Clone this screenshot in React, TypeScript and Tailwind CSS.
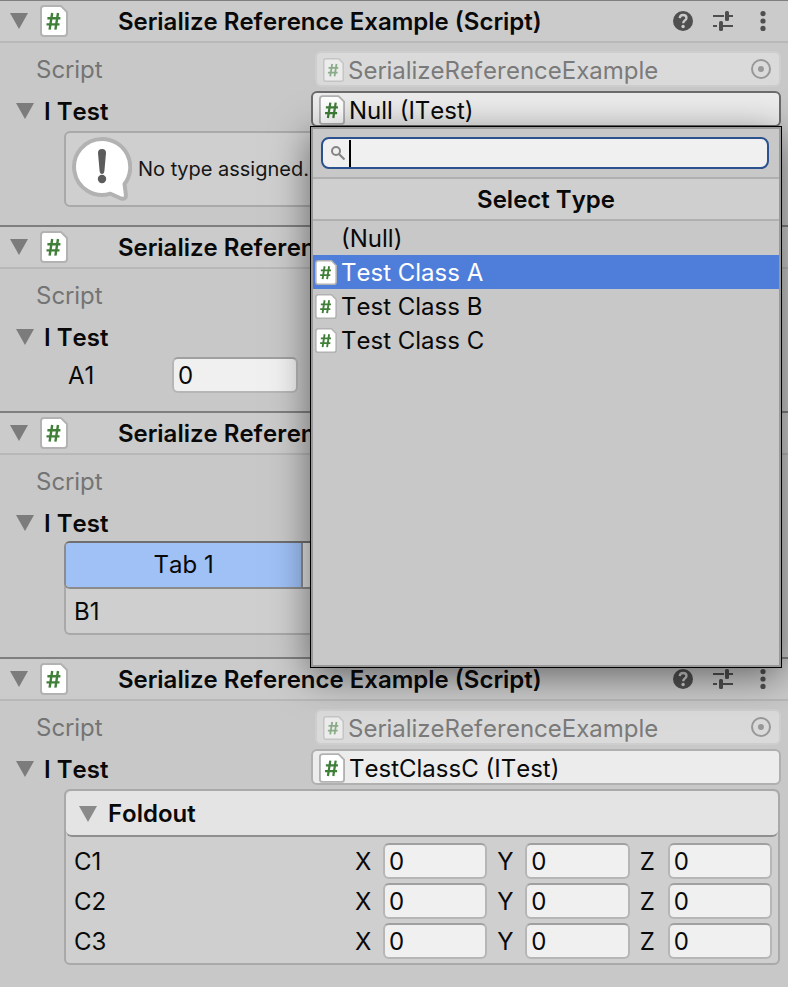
import React from "react";

type IconProps = { className?: string };

function Caret({ className = "fill-[#7c7c7c]" }: IconProps) {
  return (
    <svg viewBox="0 0 18 16" className={`h-4 w-[18px] shrink-0 ${className}`} aria-hidden="true">
      <path d="M0 0h18L9 16z" />
    </svg>
  );
}

function ScriptIcon({ className = "h-8 w-7" }: IconProps) {
  return (
    <svg viewBox="0 0 28 32" className={`shrink-0 ${className}`} aria-hidden="true">
      <path
        d="M4 1h17l6 6v21a3 3 0 0 1-3 3H4a3 3 0 0 1-3-3V4a3 3 0 0 1 3-3z"
        fill="#fff"
        stroke="#b2b2b2"
        strokeWidth="2"
      />
      <path
        d="M12.2 8 9.6 24.6M18 8l-2.600 16.600M7.400 13.200h13M6.500 19.400h13"
        fill="none"
        stroke="#3f7f38"
        strokeWidth="2.400"
      />
    </svg>
  );
}

function HelpIcon() {
  return (
    <svg viewBox="0 0 20 20" className="size-5" aria-hidden="true">
      <circle cx="10" cy="10" r="10" fill="#4f4f4f" />
      <path
        d="M6.700 7.200C6.900 5 8.200 4 10.100 4c2 0 3.400 1.100 3.400 2.900 0 2.500-3.300 2.600-3.300 5.300"
        fill="none"
        stroke="#cbcbcb"
        strokeWidth="2.300"
      />
      <circle cx="10.100" cy="15.500" r="1.700" fill="#cbcbcb" />
    </svg>
  );
}

function PresetIcon() {
  return (
    <svg viewBox="0 0 20 20" className="size-5" aria-hidden="true">
      <path d="M0 5h11M16 5h4M0 15h4M10 15h10" stroke="#4f4f4f" strokeWidth="2" />
      <rect x="12" y="0" width="4" height="10" rx="1.500" fill="#4f4f4f" />
      <rect x="6" y="10" width="4" height="10" rx="1.500" fill="#4f4f4f" />
    </svg>
  );
}

function MoreIcon() {
  return (
    <svg viewBox="0 0 6 20" className="h-5 w-1.5" fill="#4f4f4f" aria-hidden="true">
      <circle cx="3" cy="2.600" r="2.600" />
      <circle cx="3" cy="10" r="2.600" />
      <circle cx="3" cy="17.400" r="2.600" />
    </svg>
  );
}

function InfoIcon() {
  return (
    <svg viewBox="0 0 60 64" className="h-16 w-15 shrink-0" aria-hidden="true">
      <path
        d="M30 2a28 28 0 1 0 8.500 54.700L49 61.500q5.500 1.500 4.800-4.500L52.500 47A28 28 0 0 0 30 2z"
        fill="#fff"
        stroke="#b2b2b2"
        strokeWidth="4"
        strokeLinejoin="round"
      />
      <path d="M26 16q0-4 4-4t4 4l-1.600 18q-.4 3-2.400 3t-2.400-3z" fill="#5c5c5c" />
      <circle cx="30" cy="42" r="4.200" fill="#5c5c5c" />
    </svg>
  );
}

function Component({
  className,
  showActions = false,
  children,
}: {
  className: string;
  showActions?: boolean;
  children: React.ReactNode;
}) {
  return (
    <section className={`border-[#7f7f7f] ${className}`}>
      <header className="flex h-[42px] items-center border-b-2 border-[#b8b8b8] bg-[#cbcbcb] pr-[22px] pl-2.5">
        <button type="button" aria-label="Toggle component">
          <Caret />
        </button>
        <ScriptIcon className="ml-3 h-8 w-7" />
        <h2 className="ml-[50px] flex-1 pt-0.5 font-semibold whitespace-nowrap">Serialize Reference Example (Script)</h2>
        {showActions && (
          <div className="flex items-center">
            <button type="button" aria-label="Help">
              <HelpIcon />
            </button>
            <button type="button" aria-label="Presets" className="ml-5">
              <PresetIcon />
            </button>
            <button type="button" aria-label="More options" className="ml-[27px]">
              <MoreIcon />
            </button>
          </div>
        )}
      </header>
      <div className="pt-2 pr-[7px]">{children}</div>
    </section>
  );
}

function ScriptRow({ filled = false }: { filled?: boolean }) {
  return (
    <div className="flex h-9 items-center">
      <span className="w-[315px] shrink-0 pt-0.5 pl-9 text-[#747474]">Script</span>
      {filled && (
        <div className="flex h-9 min-w-0 flex-1 items-center rounded-md border-2 border-[#cecece] bg-[#dadada] pr-2 pl-1.5 text-[#7a7a7a]">
          <div className="flex min-w-0 flex-1 items-center pt-0.5">
            <ScriptIcon className="h-6 w-[21px] opacity-50" />
            <span className="ml-1 pt-0.5">SerializeReferenceExample</span>
          </div>
          <button type="button" disabled aria-label="Select script">
            <svg viewBox="0 0 20 20" className="size-5" aria-hidden="true">
              <circle cx="10" cy="10" r="9" fill="none" stroke="#989898" strokeWidth="2" />
              <circle cx="10" cy="10" r="3" fill="#989898" />
            </svg>
          </button>
        </div>
      )}
    </div>
  );
}

function TestRow({ children }: { children?: React.ReactNode }) {
  return (
    <div className="mt-1 flex h-9 items-center">
      <div className="flex w-[311px] shrink-0 items-center pt-1 pl-4">
        <button type="button" aria-label="Toggle I Test">
          <Caret />
        </button>
        <span className="ml-2.5 pt-0.5 font-semibold">I Test</span>
      </div>
      {children}
    </div>
  );
}

function TypeButton({ label, className }: { label: string; className: string }) {
  return (
    <button
      type="button"
      aria-haspopup="listbox"
      className={`flex h-9 w-full items-center rounded-md border-2 bg-[#ececec] pt-0.5 pl-1.5 ${className}`}
    >
      <ScriptIcon className="h-[30px] w-[26px]" />
      <span className="ml-1 pt-0.5">{label}</span>
    </button>
  );
}

function NumberField({ label, className }: { label: string; className: string }) {
  return (
    <input
      aria-label={label}
      defaultValue="0"
      inputMode="numeric"
      className={`h-9 min-w-0 rounded-md border-2 border-[#b6b6b6] border-t-[#a0a0a0] bg-[#f0f0f0] px-1 outline-none ${className}`}
    />
  );
}

const options = [
  { name: "(Null)", icon: false, selected: false },
  { name: "Test Class A", icon: true, selected: true },
  { name: "Test Class B", icon: true, selected: false },
  { name: "Test Class C", icon: true, selected: false },
];

function TypeMenu() {
  return (
    <div className="absolute -inset-x-px top-[35px] z-10 border border-black shadow-[0_8px_36px_rgba(0,0,0,0.5)]">
      <div className="h-[540px] border-2 border-[#999999] bg-[#c8c8c8]">
        <div className="py-2 pr-2.5 pl-2">
          <label className="flex h-8 items-center rounded-lg border-2 border-[#2b518f] bg-[#f0f0f0] px-2">
            <svg viewBox="0 0 14 14" className="size-3.5 shrink-0" fill="none" stroke="#858585" aria-hidden="true">
              <circle cx="5" cy="5" r="4" strokeWidth="2" />
              <path d="m8 8 5.500 5.500" strokeWidth="2.200" />
            </svg>
            <span className="ml-1 h-[27px] w-0.5 shrink-0 bg-black" />
            <input aria-label="Search types" className="h-7 min-w-0 flex-1 bg-transparent outline-none" />
          </label>
        </div>
        <h3 className="h-11 border-y-2 border-[#b0b0b0] bg-[#cfcfcf] text-center leading-[42px] font-semibold">
          Select Type
        </h3>
        <ul role="listbox" aria-label="Types">
          {options.map((o) => (
            <li
              key={o.name}
              role="option"
              aria-selected={o.selected}
              className={`flex h-[34px] items-center pl-0.5 ${o.selected ? "bg-[#4e7eda] text-white" : ""}`}
            >
              <span className="w-[26px] shrink-0">{o.icon && <ScriptIcon className="h-[25px] w-[22px]" />}</span>
              <span className="pt-0.5">{o.name}</span>
            </li>
          ))}
        </ul>
      </div>
    </div>
  );
}

export default function App() {
  return (
    <main className="min-h-screen overflow-x-hidden bg-[#c8c8c8] font-['Inter',sans-serif] text-[24px] leading-8 text-[#090909] [font-kerning:none]">
      <Component className="border-t pb-[18px]" showActions>
        <ScriptRow filled />
        <TestRow>
          <div className="relative min-w-0 flex-1">
            <TypeButton label="Null (ITest)" className="border-[#6c6c6c]" />
            <TypeMenu />
          </div>
        </TestRow>
        <div className="mt-1 mr-px ml-16 flex h-[76px] items-center rounded-md border-2 border-[#a9a9a9] bg-[#cfcfcf] pl-1.5 text-[20px] text-[#161616]">
          <InfoIcon />
          <p className="ml-1.5">No type assigned.</p>
        </div>
      </Component>

      <Component className="border-t-2 pb-[18px]">
        <ScriptRow />
        <TestRow />
        <div className="mt-1 flex h-9 items-center pl-[68px]">
          <span className="w-[104px] pt-0.5">A1</span>
          <NumberField label="A1" className="w-[126px]" />
        </div>
      </Component>

      <Component className="border-t-2 pb-[22px]">
        <ScriptRow />
        <TestRow />
        <div className="mt-0.5 mr-px ml-16 rounded-md border-2 border-t-0 border-[#a9a9a9] bg-[#cfcfcf]">
          <div
            role="tablist"
            className="-mx-0.5 grid h-12 grid-cols-3 overflow-hidden rounded-md border-2 border-[#8c8c8c] border-t-[#6f6f6f] bg-[#e4e4e4]"
          >
            <button
              type="button"
              role="tab"
              aria-selected="true"
              className="border-r-2 border-[#8c8c8c] bg-[#9fc1f6]"
            >
              Tab 1
            </button>
            <button type="button" role="tab" aria-label="Tab 2" className="border-r-2 border-[#8c8c8c]" />
            <button type="button" role="tab" aria-label="Tab 3" />
          </div>
          <div className="flex h-11 items-center pt-0.5 pl-2">B1</div>
        </div>
      </Component>

      <Component className="border-t-2 pb-[22px]" showActions>
        <ScriptRow filled />
        <TestRow>
          <div className="min-w-0 flex-1">
            <TypeButton label="TestClassC (ITest)" className="border-[#b0b0b0]" />
          </div>
        </TestRow>
        <div className="mt-1 mr-px ml-16 rounded-md border-2 border-[#a9a9a9] bg-[#cfcfcf]">
          <button
            type="button"
            className="flex h-[46px] w-full items-center rounded-md border-b-2 border-[#8f8f8f] bg-[#e4e4e4] pt-0.5 pl-[13px] font-semibold"
          >
            <Caret className="fill-[#8a8a8a]" />
            <span className="ml-[11px]">Foldout</span>
          </button>
          <div className="flex flex-col gap-1 pt-1.5 pr-1.5 pb-1 pl-2">
            {["C1", "C2", "C3"].map((row) => (
              <div key={row} className="flex h-9 items-center">
                <span className="w-[281px] shrink-0 pt-0.5">{row}</span>
                <div className="flex min-w-0 flex-1 gap-2.5">
                  {["X", "Y", "Z"].map((axis) => (
                    <div key={axis} className="flex min-w-0 flex-1 items-center">
                      <span className="w-7 shrink-0 pt-0.5">{axis}</span>
                      <NumberField label={`${row} ${axis}`} className="w-full flex-1" />
                    </div>
                  ))}
                </div>
              </div>
            ))}
          </div>
        </div>
      </Component>
    </main>
  );
}
